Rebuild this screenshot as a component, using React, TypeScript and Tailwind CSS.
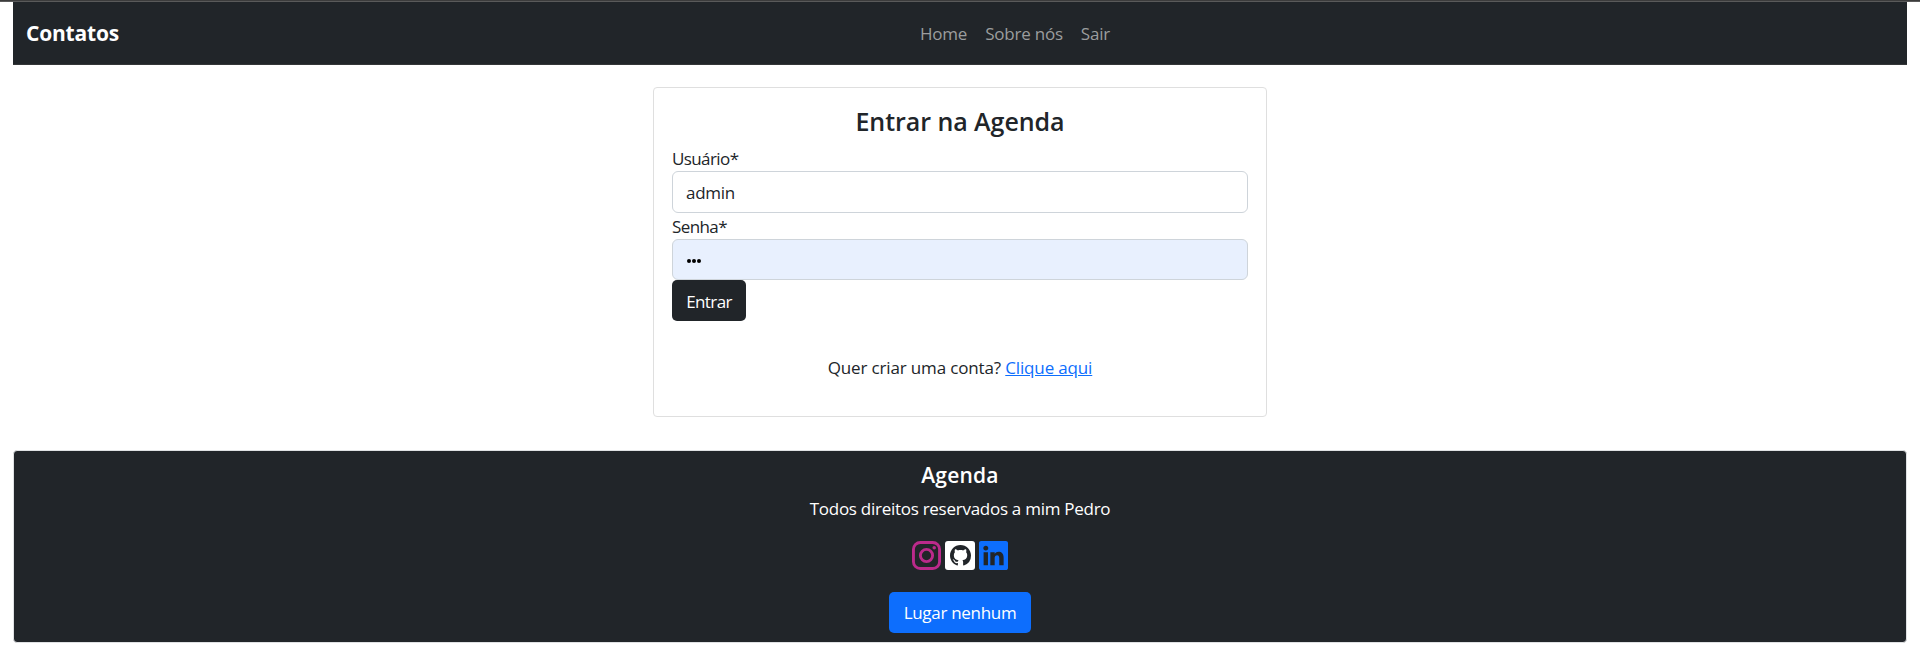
import { BsGithub, BsLinkedin } from "react-icons/bs";

function InstagramIcon() {
  return (
    <svg viewBox="0 0 29 29" className="size-[29px]" fill="none" stroke="#bb2a8b" strokeWidth="2.9">
      <rect x="1.45" y="1.45" width="26.1" height="26.1" rx="6.8" />
      <circle cx="14.5" cy="14.5" r="6.1" />
      <circle cx="22.2" cy="6.8" r="1.75" fill="#bb2a8b" stroke="none" />
    </svg>
  );
}

function NavBar() {
  return (
    <header className="mx-[13px] flex h-[63px] items-center border-b border-[#343638] bg-[#212529]">
      <a className="w-[907px] pl-[13px] text-[21px] leading-[30px] font-bold tracking-[-0.2px] text-white">Contatos</a>
      <nav className="flex gap-[18px] pt-[2px] text-[17px] leading-[26px] tracking-[-0.22px] text-[#9b9d9e]">
        <a>Home</a>
        <a>Sobre nós</a>
        <a>Sair</a>
      </nav>
    </header>
  );
}

function LoginCard() {
  return (
    <main className="mx-auto mt-[22px] flex h-[330px] w-[614px] flex-col rounded-[4px] border border-[#dfdfdf] px-[18px] pt-[17px]">
      <h1 className="h-[41px] text-center text-[25px] leading-[32px] font-semibold tracking-[-0.05px]">Entrar na Agenda</h1>
      <label className="h-[25px] leading-[26px] tracking-[-0.6px]">Usuário*</label>
      <div className="flex h-[42px] items-center rounded-[6px] border border-[#ced4da] px-[13px] pt-[2px]">admin</div>
      <label className="h-[26px] leading-[28px] tracking-[-0.6px]">Senha*</label>
      <div className="flex h-[41px] items-center gap-[1px] rounded-[6px] border border-[#ced4da] bg-[#e8f0fe] px-[14px] pt-[2px]">
        <i className="size-[4px] rounded-full bg-black" />
        <i className="size-[4px] rounded-full bg-black" />
        <i className="size-[4px] rounded-full bg-black" />
      </div>
      <button className="h-[41px] w-[74px] rounded-[5px] bg-[#212529] pt-[2px] tracking-[-0.6px] text-white">Entrar</button>
      <p className="mt-[34px] text-center leading-[26px] tracking-[-0.15px]">
        Quer criar uma conta? <a className="text-[#0d6efd] underline">Clique aqui</a>
      </p>
    </main>
  );
}

function Footer() {
  return (
    <footer className="mx-[13px] mt-[33px] flex h-[193px] flex-col items-center rounded-[4px] border border-[#dfe1e3] bg-[#212529] pt-[9px] text-white">
      <h2 className="h-[36px] text-[21px] leading-[30px] font-semibold tracking-[0.2px]">Agenda</h2>
      <p className="leading-[26px] tracking-[-0.27px]">Todos direitos reservados a mim Pedro</p>
      <div className="mt-[18px] flex h-[30px] items-center gap-[4px]">
        <InstagramIcon />
        <span className="flex h-[29px] w-[30px] items-center justify-center rounded-[3px] bg-white">
          <BsGithub className="size-[21px] text-[#212529]" />
        </span>
        <BsLinkedin className="size-[29px] text-[#0d6efd]" />
      </div>
      <button className="mt-[22px] h-[41px] w-[142px] rounded-[5px] bg-[#0d6efd]">Lugar nenhum</button>
    </footer>
  );
}

export default function App() {
  return (
    <div className="h-[647px] bg-white font-['Open_Sans','Noto_Sans',sans-serif] text-[17px] tracking-[-0.3px] text-[#212529]">
      <div className="h-[2px] border-b border-[#5a5a5a] bg-[#3c3c3c]" />
      <NavBar />
      <LoginCard />
      <Footer />
    </div>
  );
}
